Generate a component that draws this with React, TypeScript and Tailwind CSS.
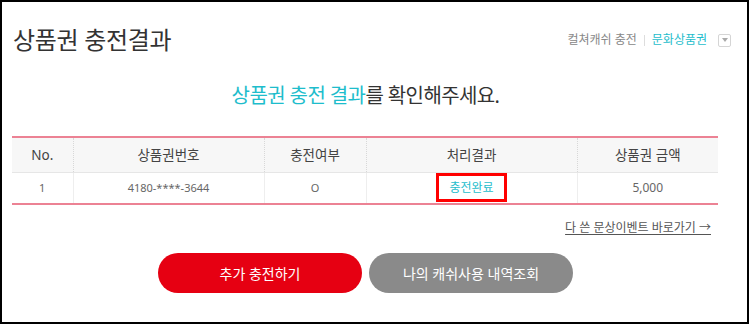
const cols = [
  { label: "No.", w: "w-[61px]" },
  { label: "상품권번호", w: "w-[191px]" },
  { label: "충전여부", w: "w-[102px]" },
  { label: "처리결과", w: "w-[211px]" },
  { label: "상품권 금액", w: "w-[141px]" },
];

const App = () => {
  return (
    <div className="w-[749px] h-[324px] border-2 border-black bg-white font-['Noto_Sans','Noto_Sans_CJK_KR',sans-serif] text-[#333] overflow-hidden">
      <header className="h-[76px] flex items-center justify-between pl-[11px] pr-[16px]">
        <h1 className="text-[24px] leading-none tracking-[-0.3px] text-[#333]">상품권 충전결과</h1>
        <div className="flex items-center text-[12px] leading-none">
          <span className="text-[#888]">컬쳐캐쉬 충전</span>
          <span className="mx-[7px] h-[11px] w-px bg-[#ddd]" />
          <span className="text-[#1ebdcc]">문화상품권</span>
          <span className="ml-[11px] w-[13px] h-[13px] border border-[#d5d5d5] rounded-[2px] flex items-center justify-center">
            <span className="w-0 h-0 border-l-[3px] border-r-[3px] border-t-[4px] border-l-transparent border-r-transparent border-t-[#aaa]" />
          </span>
        </div>
      </header>

      <p className="h-[36px] leading-[36px] text-center text-[20px] tracking-[-0.6px] pr-[18px]">
        <span className="text-[#1ebdcc]">상품권 충전 결과</span>를 확인해주세요.
      </p>

      <div className="ml-[10px] mt-[22px] w-[706px] border-t-2 border-b-2 border-[#ec8294]">
        <table className="w-full table-fixed border-collapse text-center">
          <colgroup>
            {cols.map((c) => (
              <col key={c.label} className={c.w} />
            ))}
          </colgroup>
          <thead>
            <tr className="bg-[#f7f7f7]">
              {cols.map((c, i) => (
                <th
                  key={c.label}
                  className={`h-[34px] p-0 font-normal text-[13.5px] text-[#444] border-b border-b-[#e6e6e6] ${i > 0 ? "border-l border-l-[#d8d8d8] [border-left-style:dotted]" : ""}`}
                >
                  {c.label}
                </th>
              ))}
            </tr>
          </thead>
          <tbody>
            <tr className="text-[11px] text-[#666]">
              <td className="h-[31px] p-0">1</td>
              <td className="p-0 border-l border-l-[#eeeeee]">4180-****-3644</td>
              <td className="p-0 border-l border-l-[#eeeeee]">O</td>
              <td className="p-0 border-l border-l-[#eeeeee]">
                <span className="inline-flex items-center justify-center w-[71px] h-[29px] border-[3px] border-[#ff0000] text-[12px] text-[#1ebdcc]">
                  충전완료
                </span>
              </td>
              <td className="p-0 border-l border-l-[#eeeeee] text-[12px]">5,000</td>
            </tr>
          </tbody>
        </table>
      </div>

      <div className="mt-[15px] flex justify-end pr-[36px]">
        <a href="#" className="text-[12px] leading-[16px] text-[#555] underline underline-offset-2">
          다 쓴 문상이벤트 바로가기 →
        </a>
      </div>

      <div className="mt-[17px] flex gap-[7px] pl-[156px]">
        <button className="w-[204px] h-[40px] rounded-full bg-[#e60012] text-white text-[14px]">
          추가 충전하기
        </button>
        <button className="w-[204px] h-[40px] rounded-full bg-[#8a8a8a] text-white text-[14px]">
          나의 캐쉬사용 내역조회
        </button>
      </div>
    </div>
  );
};

export default App;
